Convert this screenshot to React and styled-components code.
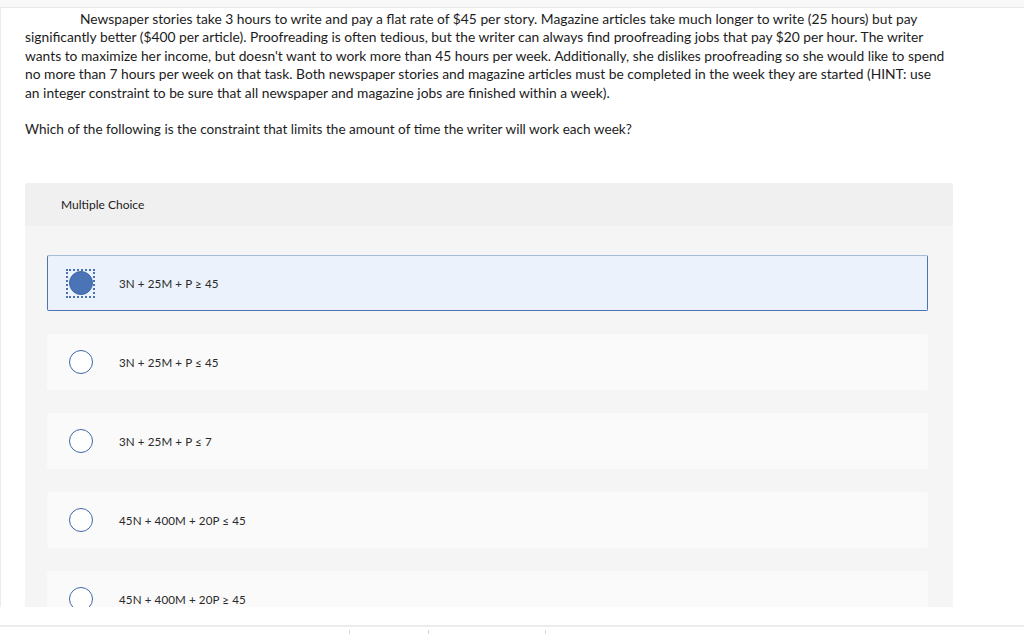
import React from "react";
import styled, { createGlobalStyle } from "styled-components";

const GlobalStyle = createGlobalStyle`
  html, body {
    margin: 0;
    padding: 0;
    background: #fff;
  }
  body {
    font-family: Lato, "Open Sans", "Liberation Sans", sans-serif;
    color: #1c1c1c;
  }
`;

const Page = styled.div`
  width: 1024px;
  height: 634px;
  overflow: hidden;
  display: flex;
  flex-direction: column;
`;

const TopStrip = styled.div`
  height: 7px;
  flex: none;
  background: #f8f8f8;
  border-bottom: 1px solid #e8e8e8;
`;

const Viewport = styled.div`
  height: 599px;
  flex: none;
  overflow: hidden;
  padding: 2px 71px 0 24px;
  border-left: 1px solid #ececec;
  box-sizing: border-box;
`;

const Prompt = styled.p`
  margin: 0;
  font-size: 13.8px;
  line-height: 18.4px;
`;

const Line = styled.span`
  display: block;
  white-space: nowrap;
  padding-left: ${(p) => (p.indent ? "55px" : "0")};
`;

const Question = styled.p`
  margin: 18px 0 0;
  font-size: 13.6px;
  line-height: 18.4px;
`;

const Choices = styled.section`
  margin-top: 45px;
  background: #f5f5f5;
  border-radius: 3px 3px 0 0;
`;

const ChoicesHeader = styled.div`
  height: 43px;
  display: flex;
  align-items: center;
  padding-left: 36px;
  background: #f0f0f0;
  border-radius: 3px 3px 0 0;
  font-size: 12px;
  color: #222;
`;

const ChoiceList = styled.div`
  display: flex;
  flex-direction: column;
  gap: 23px;
  padding: 29px 25px 40px 22px;
`;

const Choice = styled.label`
  height: 56px;
  box-sizing: border-box;
  display: flex;
  align-items: center;
  padding-left: 18px;
  border-radius: 2px;
  background: ${(p) => (p.selected ? "#ebf2fb" : "#fafafa")};
  border: 1px solid ${(p) => (p.selected ? "#4d74b2" : "#fafafa")};
  border-top-color: ${(p) => (p.selected ? "#a7bcdd" : "#fafafa")};
  cursor: pointer;
`;

const RadioWrap = styled.span`
  width: 29px;
  height: 29px;
  flex: none;
  display: flex;
  align-items: center;
  justify-content: center;
  box-sizing: border-box;
  border: ${(p) => (p.focused ? "2px dotted #4a72b3" : "2px solid transparent")};
`;

const Radio = styled.span`
  width: 24px;
  height: 24px;
  box-sizing: border-box;
  border-radius: 50%;
  border: 1px solid #3e67a6;
  background: ${(p) => (p.checked ? "#4a74b5" : "#fff")};
`;

const ChoiceText = styled.span`
  margin-left: 24px;
  font-size: 11.6px;
  color: #2a2a2a;
  letter-spacing: 0.1px;
`;

const Footer = styled.div`
  flex: none;
  margin-top: 18px;
  border-top: 2px solid #ececec;
  height: 10px;
  display: flex;
`;

const Tick = styled.span`
  width: 1px;
  height: 5px;
  margin-top: 3px;
  background: #d8d8d8;
  margin-left: ${(p) => p.left}px;
`;

const promptLines = [
  "Newspaper stories take 3 hours to write and pay a flat rate of $45 per story. Magazine articles take much longer to write (25 hours) but pay",
  "significantly better ($400 per article). Proofreading is often tedious, but the writer can always find proofreading jobs that pay $20 per hour. The writer",
  "wants to maximize her income, but doesn't want to work more than 45 hours per week. Additionally, she dislikes proofreading so she would like to spend",
  "no more than 7 hours per week on that task. Both newspaper stories and magazine articles must be completed in the week they are started (HINT: use",
  "an integer constraint to be sure that all newspaper and magazine jobs are finished within a week).",
];

const options = [
  "3N + 25M + P \u2265 45",
  "3N + 25M + P \u2264 45",
  "3N + 25M + P \u2264 7",
  "45N + 400M + 20P \u2264 45",
  "45N + 400M + 20P \u2265 45",
];

export default function App() {
  const selected = 0;
  return (
    <Page>
      <GlobalStyle />
      <TopStrip />
      <Viewport>
        <Prompt>
          {promptLines.map((l, i) => (
            <Line key={i} indent={i === 0}>
              {l}
            </Line>
          ))}
        </Prompt>
        <Question>
          Which of the following is the constraint that limits the amount of time the writer will work each week?
        </Question>
        <Choices>
          <ChoicesHeader>Multiple Choice</ChoicesHeader>
          <ChoiceList>
            {options.map((o, i) => (
              <Choice key={i} selected={i === selected}>
                <RadioWrap focused={i === selected}>
                  <Radio checked={i === selected} />
                </RadioWrap>
                <ChoiceText>{o}</ChoiceText>
              </Choice>
            ))}
          </ChoiceList>
        </Choices>
      </Viewport>
      <Footer>
        <Tick left={349} />
        <Tick left={78} />
        <Tick left={116} />
      </Footer>
    </Page>
  );
}
